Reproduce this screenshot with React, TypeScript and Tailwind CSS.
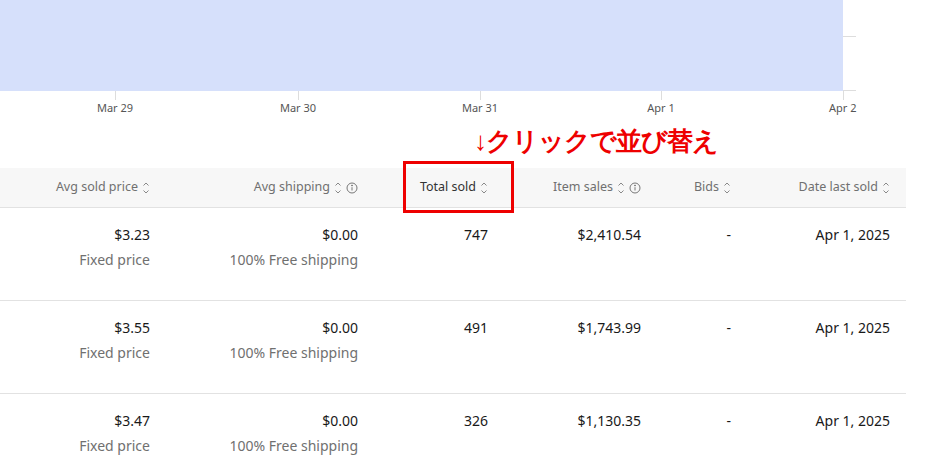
import React from 'react';

const Sort = () => (
  <svg width="8" height="14" viewBox="0 0 8 14" className="ml-1 inline-block text-[#888]" fill="none" stroke="currentColor" strokeWidth="1">
    <path d="M1.5 4.5 4 2l2.5 2.5M1.5 9.5 4 12l2.5-2.5" />
  </svg>
);

const Info = () => (
  <svg width="12" height="12" viewBox="0 0 12 12" className="ml-1 inline-block text-[#777]" fill="none" stroke="currentColor" strokeWidth="1">
    <circle cx="6" cy="6" r="5" />
    <path d="M6 5.2v3.3" />
    <circle cx="6" cy="3.5" r="0.5" fill="currentColor" />
  </svg>
);

const cols = 'grid grid-cols-[150px_208px_130px_153px_90px_159px] pr-4';

const rows = [
  ['$3.23', '$0.00', '747', '$2,410.54'],
  ['$3.55', '$0.00', '491', '$1,743.99'],
  ['$3.47', '$0.00', '326', '$1,130.35'],
];

export default function App() {
  return (
    <div className="relative h-[469px] w-[937px] overflow-hidden bg-white font-[Inter,'Noto_Sans_CJK_JP',sans-serif]">
      <div className="flex h-[91px]">
        <div className="w-[843px] bg-[#d6e0fb]" />
        <div className="flex w-[13px] flex-col justify-end">
          <div className="mb-[53px] h-px bg-[#ddd]" />
          <div className="h-px bg-[#ddd]" />
        </div>
      </div>
      <div className="relative h-[77px] text-[11px] text-[#555]">
        {[115, 298, 480, 661].map((x, i) => (
          <div key={x} className="absolute top-0 flex w-[60px] flex-col items-center" style={{ left: x - 30 }}>
            <div className="h-[9px] w-px bg-[#ddd]" />
            <span className="mt-[1px] leading-[14px]">{['Mar 29', 'Mar 30', 'Mar 31', 'Apr 1'][i]}</span>
          </div>
        ))}
        <div className="absolute left-[829px] top-0 flex flex-col items-end">
          <div className="mr-[13px] h-[9px] w-px bg-[#ddd]" />
          <span className="mt-[1px] leading-[14px]">Apr 2</span>
        </div>
        <div className="absolute left-[474px] top-[36px] text-[26px] font-black leading-none tracking-[-1px] text-[#ee0000]">
          <span className="font-normal">↓</span>クリックで並び替え
        </div>
      </div>
      <div className={`${cols} h-[40px] w-[906px] items-center border-b border-[#e2e2e2] bg-[#f7f7f7] text-[12.5px] text-[#707070]`}>
        <div className="flex items-center justify-end">Avg sold price<Sort /></div>
        <div className="flex items-center justify-end">Avg shipping<Sort /><Info /></div>
        <div className="flex items-center justify-end text-[#333]">Total sold<Sort /></div>
        <div className="flex items-center justify-end">Item sales<Sort /><Info /></div>
        <div className="flex items-center justify-end">Bids<Sort /></div>
        <div className="flex items-center justify-end">Date last sold<Sort /></div>
      </div>
      <div className="absolute left-[403px] top-[161px] h-[52px] w-[111px] border-[3px] border-[#ee0000]" />
      {rows.map((r, i) => (
        <div key={i} className={`${cols} h-[93px] w-[906px] border-b border-[#e2e2e2] pt-[17px] text-[14px] leading-[20px] text-[#191919]`}>
          <div className="flex flex-col items-end gap-[5px]">
            <span>{r[0]}</span>
            <span className="text-[#707070]">Fixed price</span>
          </div>
          <div className="flex flex-col items-end gap-[5px]">
            <span>{r[1]}</span>
            <span className="text-[#707070]">100% Free shipping</span>
          </div>
          <div className="text-right">{r[2]}</div>
          <div className="text-right">{r[3]}</div>
          <div className="text-right">-</div>
          <div className="text-right">Apr 1, 2025</div>
        </div>
      ))}
    </div>
  );
}
